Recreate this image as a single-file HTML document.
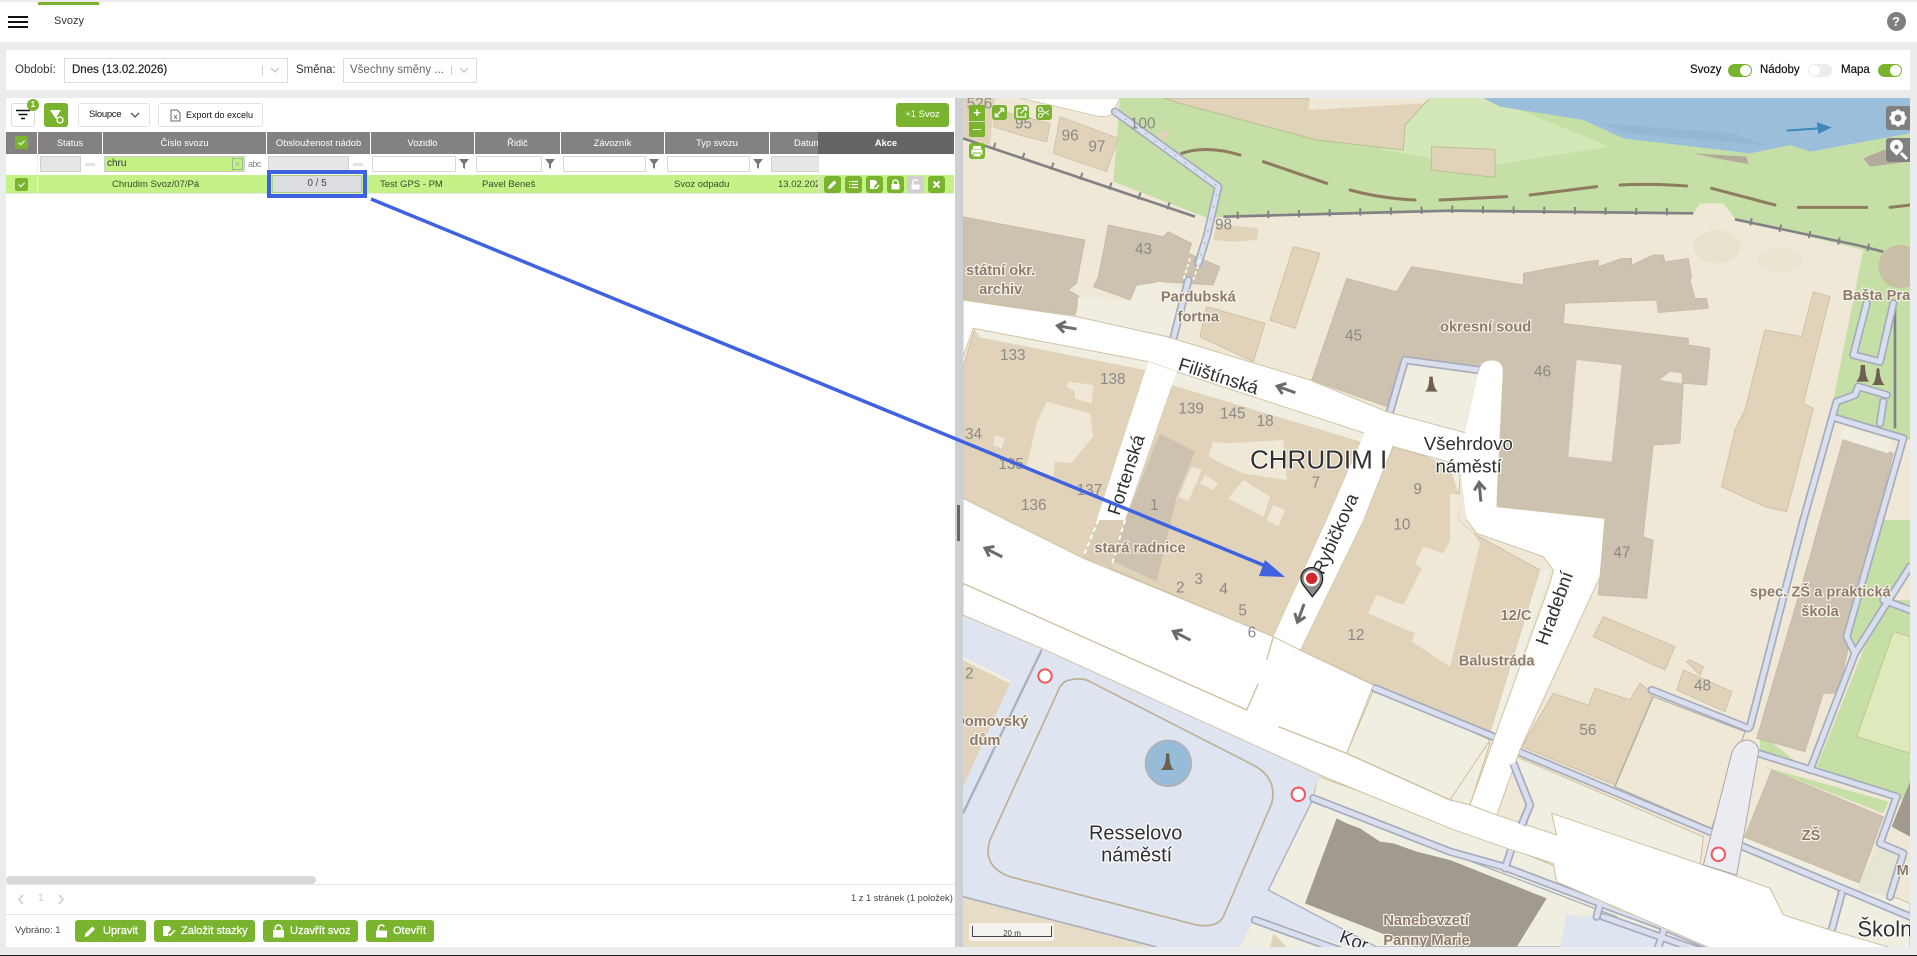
<!DOCTYPE html>
<html lang="cs"><head><meta charset="utf-8"><title>Svozy</title>
<style>
html,body{margin:0;padding:0}
body{width:1917px;height:956px;position:relative;overflow:hidden;background:#ebecee;font-family:"Liberation Sans",sans-serif;color:#333}
.a{position:absolute}
.l{position:absolute;white-space:nowrap;line-height:14px}
.box{position:absolute;box-sizing:border-box}
.th{position:absolute;top:132px;height:22px;background:#848280;color:#fff;font-size:9.3px;line-height:22px;text-align:center;white-space:nowrap;overflow:hidden}
.inp{position:absolute;top:156px;height:16px;box-sizing:border-box;border:1px solid #d9d9d9;background:#fff}
.g{background:#e6e6e6;border-color:#d0d0d0}
.dash{position:absolute;top:163px;width:10px;height:3px;background:#e2e2e2}
.tx{position:absolute;top:178px;font-size:9.5px;line-height:13px;color:#3c4a2c;white-space:nowrap}
.gb{position:absolute;background:#7ab32e;border-radius:3px;color:#fff;box-sizing:border-box}
.act{top:176px;width:17px;height:17px}
.btm{top:920px;height:22px;font-size:11px;line-height:22px;white-space:nowrap;-webkit-text-stroke:.25px #fff}
.btm svg{position:absolute;top:4px}
.btm span{position:absolute;top:0}
.cb{position:absolute;left:15px;width:13px;height:13px;background:#7ab32e;border-radius:2px}
.tg{position:absolute;top:64px;width:24px;height:13px;border-radius:7px;background:#7ab32e}
.tg i{position:absolute;top:1px;right:1px;width:11px;height:11px;border-radius:50%;background:#fff}
.sel{position:absolute;top:58px;height:25px;box-sizing:border-box;border:1px solid #ddd;background:#fff}
svg{display:block}
#map text{font-family:"Liberation Sans",sans-serif}
.n{fill:#8a8a88;font-size:46px}
.b{fill:#8f7b6c;font-size:44px;font-weight:bold;stroke:#f6f3ea;stroke-width:7px;paint-order:stroke}
.s{fill:#303030;font-size:56px;stroke:#fff;stroke-width:7px;paint-order:stroke}
.c{text-anchor:middle}
.ar{fill:none;stroke:#6b6b6b;stroke-width:9}
</style></head><body>

<!-- top bar -->
<div class="box" style="left:0;top:1px;width:1917px;height:41px;background:#fff;border-top:1px solid #f1e6f0"></div>
<div class="box" style="left:38px;top:2px;width:61px;height:3px;background:#7ab32e"></div>
<div class="box" style="left:8px;top:16px;width:20px;height:2px;background:#111"></div>
<div class="box" style="left:8px;top:21px;width:20px;height:2px;background:#111"></div>
<div class="box" style="left:8px;top:26px;width:20px;height:2px;background:#111"></div>
<div class="l" style="left:54px;top:14px;font-size:11px;color:#333">Svozy</div>
<div class="box" style="left:1886.5px;top:12px;width:19px;height:19px;border-radius:50%;background:#7f7f7f;color:#fff;font-size:13px;font-weight:bold;text-align:center;line-height:19px">?</div>

<!-- filter bar -->
<div class="box" style="left:6px;top:50px;width:1904px;height:40px;background:#fff"></div>
<div class="l" style="left:15px;top:63px;font-size:11.5px;color:#333">Období:</div>
<div class="sel" style="left:64px;width:224px"></div>
<div class="l" style="left:72px;top:63px;font-size:11.5px;color:#222;-webkit-text-stroke:.2px #222">Dnes (13.02.2026)</div>
<div class="box" style="left:262px;top:66px;width:1px;height:9px;background:#ccc"></div>
<svg class="a" style="left:270px;top:67px" width="10" height="7"><path d="M1 1l4 4 4-4" fill="none" stroke="#ccc" stroke-width="1.5"/></svg>
<div class="l" style="left:296px;top:63px;font-size:11.5px;color:#333">Směna:</div>
<div class="sel" style="left:343px;width:134px"></div>
<div class="l" style="left:350px;top:63px;font-size:11.5px;color:#666">Všechny směny ...</div>
<div class="box" style="left:451px;top:66px;width:1px;height:9px;background:#ccc"></div>
<svg class="a" style="left:459px;top:67px" width="10" height="7"><path d="M1 1l4 4 4-4" fill="none" stroke="#ccc" stroke-width="1.5"/></svg>
<div class="l" style="left:1690px;top:63px;font-size:11.5px;color:#111;-webkit-text-stroke:.2px #111">Svozy</div>
<div class="tg" style="left:1728px"><i></i></div>
<div class="l" style="left:1760px;top:63px;font-size:11.5px;color:#111;-webkit-text-stroke:.2px #111">Nádoby</div>
<div class="tg" style="left:1808px;background:#ebecee"><i style="right:auto;left:1px"></i></div>
<div class="l" style="left:1841px;top:63px;font-size:11.5px;color:#111;-webkit-text-stroke:.2px #111">Mapa</div>
<div class="tg" style="left:1878px"><i></i></div>

<!-- left panel -->
<div class="box" style="left:6px;top:98px;width:949px;height:849px;background:#fff"></div>
<div class="box" style="left:11px;top:103px;width:24px;height:24px;background:#fff;border:1px solid #ddd;border-radius:3px"></div>
<svg class="a" style="left:15px;top:108px" width="16" height="14"><path d="M1 2.500h14M3.500 6.500h9M6 10.500h4" stroke="#111" stroke-width="1.6"/></svg>
<div class="box" style="left:27px;top:99px;width:12px;height:12px;border-radius:50%;background:#7ab32e;color:#fff;font-size:8px;line-height:12px;text-align:center;font-weight:bold">1</div>
<div class="gb" style="left:44px;top:103px;width:24px;height:24px"><svg width="24" height="24"><path d="M6 7h11l-4 6v3l-3-2v-1z" fill="#fff"/><circle cx="16" cy="17" r="3" fill="#7ab32e" stroke="#fff" stroke-width="1.3"/></svg></div>
<div class="box" style="left:78px;top:103px;width:72px;height:24px;background:#fff;border:1px solid #e2e2e2;border-radius:3px"></div>
<div class="l" style="left:89px;top:108px;font-size:9.500px;letter-spacing:-.3px;color:#111">Sloupce</div>
<svg class="a" style="left:130px;top:112px" width="10" height="7"><path d="M1 1l4 4 4-4" fill="none" stroke="#555" stroke-width="1.3"/></svg>
<div class="box" style="left:158px;top:103px;width:105px;height:24px;background:#fff;border:1px solid #e2e2e2;border-radius:3px"></div>
<svg class="a" style="left:170px;top:109px" width="11" height="13"><path d="M1 1h6l3 3v8H1z" fill="#fff" stroke="#666"/><path d="M4 6l3 4M7 6l-3 4" stroke="#666" stroke-width=".8"/></svg>
<div class="l" style="left:186px;top:108px;font-size:9px;color:#111">Export do excelu</div>
<div class="gb" style="left:896px;top:103px;width:53px;height:24px;font-size:9.500px;line-height:24px;text-align:center">+1 Svoz</div>

<!-- table header -->
<div class="th" style="left:6px;width:31px"></div>
<div class="th" style="left:38px;width:64px">Status</div>
<div class="th" style="left:103px;width:163px">Číslo svozu</div>
<div class="th" style="left:267px;width:103px">Obslouženost nádob</div>
<div class="th" style="left:371px;width:103px">Vozidlo</div>
<div class="th" style="left:475px;width:85px">Řidič</div>
<div class="th" style="left:561px;width:103px">Závozník</div>
<div class="th" style="left:665px;width:104px">Typ svozu</div>
<div class="th" style="left:770px;width:48px;text-align:left;padding-left:24px;box-sizing:border-box">Datum</div>
<div class="th" style="left:818px;width:136px;background:#656565;font-weight:bold">Akce</div>
<div class="cb" style="top:136px"><svg width="13" height="13"><path d="M3.500 6.500l2.200 2.200 4-4" fill="none" stroke="#dfe" stroke-width="1.2"/></svg></div>

<!-- filter row -->
<div class="box" style="left:37px;top:154px;width:1px;height:40px;background:#eee"></div>
<div class="inp g" style="left:40px;width:41px"></div><div class="dash" style="left:85px"></div>
<div class="inp" style="left:104px;width:141px;background:#c3f283;border-color:#ccc"></div>
<div class="l" style="left:107px;top:157px;font-size:10px;color:#333">chru</div>
<div class="box" style="left:232px;top:158px;width:11px;height:12px;border:1px solid #9aba8a;color:#9aa;font-size:9px;line-height:10px;text-align:center">×</div>
<div class="l" style="left:248px;top:157px;font-size:9px;color:#888;letter-spacing:-.6px">abc</div>
<div class="inp g" style="left:268px;width:81px"></div><div class="dash" style="left:353px"></div>
<div class="inp" style="left:372px;width:84px"></div>
<div class="inp" style="left:476px;width:66px"></div>
<div class="inp" style="left:563px;width:83px"></div>
<div class="inp" style="left:667px;width:83px"></div>
<div class="inp g" style="left:771px;width:47px;border-right:0"></div>
<svg class="a" style="left:459px;top:159px" width="10" height="10"><path d="M0 0h10L6 5v5L4 8.500V5z" fill="#777"/></svg>
<svg class="a" style="left:545px;top:159px" width="10" height="10"><path d="M0 0h10L6 5v5L4 8.500V5z" fill="#777"/></svg>
<svg class="a" style="left:649px;top:159px" width="10" height="10"><path d="M0 0h10L6 5v5L4 8.500V5z" fill="#777"/></svg>
<svg class="a" style="left:753px;top:159px" width="10" height="10"><path d="M0 0h10L6 5v5L4 8.500V5z" fill="#777"/></svg>

<!-- data row -->
<div class="box" style="left:6px;top:175px;width:948px;height:19px;background:#c4f286;border-bottom:1px solid #e6e6e6"></div>
<div class="box" style="left:37px;top:175px;width:1px;height:19px;background:#e8f8d0"></div>
<div class="box" style="left:818px;top:154px;width:1px;height:40px;background:#e2e8d8"></div>
<div class="cb" style="top:178px"><svg width="13" height="13"><path d="M3.500 6.500l2.200 2.200 4-4" fill="none" stroke="#dfe" stroke-width="1.2"/></svg></div>
<div class="tx" style="left:112px">Chrudim Svoz/07/Pá</div>
<div class="box" style="left:272px;top:175px;width:90px;height:18px;background:#dcdde0;border:1px solid #a9d46c;font-size:9.800px;line-height:16px;text-align:center;color:#444">0 / 5</div>
<div class="tx" style="left:380px">Test GPS - PM</div>
<div class="tx" style="left:482px">Pavel Beneš</div>
<div class="tx" style="left:674px">Svoz odpadu</div>
<div class="tx" style="left:778px;width:40px;overflow:hidden">13.02.2026</div>

<div class="gb act" style="left:824px"><svg width="17" height="17"><path d="M4 13l.7-3 5.500-5.500 2.300 2.300L7 12.300z" fill="#fff"/></svg></div>
<div class="gb act" style="left:845px"><svg width="17" height="17"><path d="M6.500 5.500h6.500M6.500 8.500h6.500M6.500 11.500h6.500M4 5.500h1.300M4 8.500h1.300M4 11.500h1.300" stroke="#fff" stroke-width="1.2"/></svg></div>
<div class="gb act" style="left:866px"><svg width="17" height="17"><path d="M4 4h5l2 2v1l-3 3.500V13H4z" fill="#fff"/><path d="M8.500 11.500l1.500 1 3-3.500" fill="none" stroke="#fff" stroke-width="1.400"/></svg></div>
<div class="gb act" style="left:887px"><svg width="17" height="17"><path d="M4.500 8h8v5.500h-8z" fill="#fff"/><path d="M6 8V6.500a2.500 2.500 0 0 1 5 0V8" fill="none" stroke="#fff" stroke-width="1.400"/></svg></div>
<div class="gb act" style="left:907px;background:#cfcfcf"><svg width="17" height="17"><path d="M4.500 8.500h8v5h-8z" fill="#fff"/><path d="M6 8.500V6a2.500 2.500 0 0 1 4.800-.8" fill="none" stroke="#fff" stroke-width="1.400"/></svg></div>
<div class="gb act" style="left:928px"><svg width="17" height="17"><path d="M5.500 5.500l6 6M11.500 5.500l-6 6" stroke="#fff" stroke-width="2"/></svg></div>

<!-- bottom -->
<div class="box" style="left:6px;top:876px;width:310px;height:8px;background:#d8d8d8;border-radius:4px"></div>
<div class="box" style="left:6px;top:884px;width:949px;height:1px;background:#e4e4e4"></div>
<svg class="a" style="left:17px;top:894px" width="8" height="11"><path d="M6 1L2 5.500 6 10" fill="none" stroke="#ccc" stroke-width="1.500"/></svg>
<div class="l" style="left:38px;top:892px;font-size:10px;color:#ccc">1</div>
<svg class="a" style="left:57px;top:894px" width="8" height="11"><path d="M2 1L6 5.500 2 10" fill="none" stroke="#ccc" stroke-width="1.500"/></svg>
<div class="l" style="left:851px;top:891px;font-size:9.300px;color:#444">1 z 1 stránek (1 položek)</div>
<div class="box" style="left:6px;top:914px;width:949px;height:1px;background:#e4e4e4"></div>
<div class="l" style="left:15px;top:924px;font-size:9.500px;color:#444">Vybráno: 1</div>
<div class="gb btm" style="left:75px;width:71px"><svg style="left:8px" width="14" height="14"><path d="M1.500 13l.9-3.500 7-7 2.600 2.600-7 7z" fill="#fff"/></svg><span style="left:28px">Upravit</span></div>
<div class="gb btm" style="left:154px;width:101px"><svg style="left:8px" width="14" height="14"><path d="M1 2h6l2 2v1.500L6 9v3H1z" fill="#fff"/><path d="M6.500 10l1.700 1.300 4.800-5.300" fill="none" stroke="#fff" stroke-width="1.500"/></svg><span style="left:27px">Založit stazky</span></div>
<div class="gb btm" style="left:263px;width:95px"><svg style="left:9px" width="14" height="14"><path d="M1 6h11v7.500H1z" fill="#fff"/><path d="M3.300 6V4.300a3.200 3.200 0 0 1 6.400 0V6" fill="none" stroke="#fff" stroke-width="1.600"/></svg><span style="left:27px">Uzavřít svoz</span></div>
<div class="gb btm" style="left:366px;width:68px"><svg style="left:9px" width="14" height="14"><path d="M1 6.500h11v7H1z" fill="#fff"/><path d="M3.300 6.500V4a3.200 3.200 0 0 1 6-1.300" fill="none" stroke="#fff" stroke-width="1.600"/></svg><span style="left:27px">Otevřít</span></div>

<!-- splitter -->
<div class="box" style="left:955px;top:98px;width:8px;height:849px;background:#ccd0d3"></div>
<div class="box" style="left:957px;top:505px;width:3px;height:36px;background:#666"></div>

<!-- map -->
<svg id="map" class="a" style="left:963px;top:98px" width="947" height="849" viewBox="39 24 2841 2547">
<defs><g id="pp">
<path d="M495 65L805 290L770 440L745 520M715 570L670 745"/>
<path d="M1320 965L1365 810L1585 840"/>
<path d="M2560 1290L2660 935L2715 915L2725 890L2810 915M2660 985L2860 1045M2860 1045L2790 1290L2690 1640L2715 1690L2580 2040M2880 1430L2715 1690M2800 1530L2880 1560"/>
<path d="M2800 935L2790 1000M2750 640L2710 795L2790 815L2830 640"/>
<path d="M2560 1290L2400 1910"/>
<path d="M2425 1990L2840 2120L2790 2260L2860 2290L2820 2420"/>
<path d="M2355 2260L2880 2480M2675 2410L2645 2520"/>
<path d="M1275 1795L1630 1940L1705 1985L2280 2225M2105 1800L2395 1915"/>
<path d="M1690 2020L1740 2145L1715 2205"/>
<path d="M1090 2125L1500 2285L1660 2330L1950 2440L2140 2510L2330 2590M1685 2275L1665 2335M1955 2425L1940 2480M2150 2495L2125 2571M1960 2480L2300 2600"/>
<path d="M915 2490L1180 2585"/>
</g></defs>
<g style="filter:blur(.6px)">
<rect x="39" y="24" width="2841" height="2547" fill="#efe8d6"/>
<!-- greens -->
<path d="M510 24L490 275L775 385L820 380L1500 360L2230 370L2250 340L2320 340L2355 385L2740 480L2650 930L2640 985L2880 1050V24Z" fill="#c6dfa6"/>
<path d="M1000 24H1620L1980 170L1600 230L1300 180Z" fill="#d4e7b6"/>
<path d="M2150 24L2400 60L2800 24Z" fill="#d4e7b6"/>
<path d="M2790 1290H2880V1430L2710 1680L2680 1640Z" fill="#c6dfa6"/>
<path d="M2800 1530L2600 2030L2880 2140V1530Z" fill="#c6dfa6"/>
<path d="M2830 1625L2880 1640V1990L2720 1940Z" fill="#dfeabc" stroke="#c3c58f" stroke-width="3"/>
<path d="M2430 1930L2570 2040L2430 2000Z" fill="#c6dfa6"/>
<path d="M2440 2030L2815 2135L2800 2170Z" fill="#c6dfa6"/>
<path d="M2700 1290L2790 1290L2680 1650L2665 1700L2620 1800Z" fill="#c6dfa6"/>
<!-- river -->
<path d="M1600 24L1650 50L1900 90L2020 145L2400 190L2520 165L2580 185L2880 130V24Z" fill="#9bbfdb"/>
<path d="M1950 100L2350 130L2440 165L2040 130Z" fill="#8fb3cf" opacity=".6"/>
<path d="M2230 190L2390 200L2395 222L2300 205Z" fill="#b3ab9a"/>
<path d="M2740 205L2800 180L2880 175V215L2760 230Z" fill="#b3ab9a"/>
<path d="M2510 122L2605 115" stroke="#3e87bd" stroke-width="6" fill="none"/><path d="M2600 96L2645 112L2605 132Z" fill="#3e87bd"/>
<!-- top buildings -->
<path d="M640 24L1440 24L1365 105L1360 180L1100 150L690 40Z" fill="#e0d3b9" stroke="#b9c08f" stroke-width="3"/>
<path d="M1080 24H1440L1420 40L1075 60Z" fill="#efe8d6"/>
<path d="M1445 170L1635 178L1635 262L1445 240Z" fill="#e0d3b9" stroke="#b9c08f" stroke-width="3"/>
<path d="M39 24H135L120 165L39 140Z" fill="#e0d3b9"/>
<path d="M140 60L300 100L290 155L225 140L130 110Z" fill="#e0d3b9" stroke="#d1c4a8" stroke-width="3"/>
<path d="M330 80L505 145L470 245L310 190Z" fill="#e0d3b9" stroke="#d1c4a8" stroke-width="3"/>
<path d="M210 24H510L490 65Q480 85 440 78Z" fill="#fff" stroke="#d8ccb2" stroke-width="3"/>
<path d="M620 130L660 120L640 160Z" fill="#e0d3b9"/>
<path d="M800 400L925 415L920 450L850 455L790 450Z" fill="#e0d3b9"/>
<!-- walls / brown -->
<g fill="none" stroke="#8d7c60" stroke-width="9" stroke-linecap="round">
<path d="M695 190Q770 165 870 195M940 215L1130 280M1200 300Q1290 325 1395 330M1470 330L1670 320M1740 315L1940 290M2010 285Q2100 280 2210 288M2285 295L2475 345M2545 352H2750M2820 352L2880 345"/></g>
<g fill="none" stroke="#828285">
<path d="M39 145L735 380" stroke-width="8"/><path d="M130 168L735 375" stroke-width="22" stroke-dasharray="6 86"/>
<path d="M820 380L1500 362L2230 370" stroke-width="8"/><path d="M860 376L1500 358L2230 366" stroke-width="22" stroke-dasharray="6 86"/>
<path d="M2355 388L2720 465L2800 485" stroke-width="8"/><path d="M2400 395L2800 482" stroke-width="22" stroke-dasharray="6 84"/>
<path d="M2835 640V1015" stroke-width="8"/></g>
<circle cx="2850" cy="530" r="65" fill="#c9bea6"/>
<ellipse cx="2300" cy="470" rx="70" ry="50" fill="#d9d6bb" opacity=".35"/>
<ellipse cx="2490" cy="510" rx="70" ry="40" fill="#e4dec7" opacity=".35"/>
<!-- dark tan buildings -->
<g fill="#cdc2af" stroke="#c2b69f" stroke-width="2">
<path d="M39 380L405 450L380 580L355 600L390 620L375 675L39 630Z"/>
<path d="M475 405L640 440L655 425L725 460L715 490L810 530L790 585L630 575L560 585L540 630L430 590L445 560Z"/>
<path d="M1190 565L1340 605L1385 530L1720 585L1720 550L1800 535L1910 515L1945 510L1945 530L2015 505L2045 505L2045 525L2110 495L2140 495L2145 515L2215 505L2225 560L2220 570L2235 625L2270 625L2275 655L2125 668L2120 630L1845 640L1840 700L2215 745L2215 765L2280 775L2270 885L2200 880L2190 1060L2110 1065L2085 1290L2080 1340L2110 1350L2090 1525L1945 1515L1950 1460L1965 1290L1640 1250L1660 845L1360 800L1310 950L1085 870Z"/>
<path d="M2680 1045L2830 1090L2780 1290L2665 1810L2620 1810L2565 1985L2420 1945L2580 1400L2610 1290Z"/>
<path d="M2465 2040L2800 2180L2720 2400L2380 2250Z"/>
</g>
<path d="M1880 810L2015 825L1985 1115L1855 1100Z" fill="#efe8d6"/>
<path d="M2130 870L2160 845L2195 850L2195 880Z" fill="#efe8d6"/>
<!-- light buildings -->
<g fill="#e0d3b9" stroke="#cfc2a6" stroke-width="3">
<path d="M2590 605L2640 620L2560 940L2590 955L2510 1265L2445 1250L2315 1190L2355 1020L2385 960L2445 720L2555 740Z"/>
<path d="M1030 470L1110 490L1035 715L960 690Z"/>
<path d="M750 740L770 650L945 700L910 815Z"/>
<path d="M1930 1640L1960 1580L2175 1670L2145 1740Z"/>
<path d="M2210 1715L2220 1710L2260 1730L2250 1755Z"/>
<path d="M2180 1800L2200 1740L2345 1805L2325 1865Z"/>
<path d="M1715 1970L1810 1810L1915 1845L1935 1795L2040 1830L2070 1780L2110 1810L1995 2085Z"/>
</g>
<path d="M385 620L545 635L560 590L630 575L700 600L660 740L380 680Z" fill="#efeee0"/>
<path d="M2680 1010L2825 1050L2815 1090L2670 1045Z" fill="#efeee0"/>
<!-- paths -->
<path d="M2110 1820L2385 1925L2285 2215L1995 2090Z" fill="#efe8d6" stroke="#a9a9a9" stroke-width="3"/>
<!-- pale strips -->
<path d="M1700 2000L2260 2240L2250 2325L1805 2170L1820 2235L1730 2205L1745 2145L1690 2020Z" fill="#efeee0" stroke="#cdbf9f" stroke-width="3"/>
<path d="M1500 1930L1620 1960L1560 2145L1500 2130Z" fill="#efeee0" stroke="#cdbf9f" stroke-width="3"/>
<path d="M1275 1790L1190 1990L1500 2130L1620 1950Z" fill="#efeee0" stroke="#cdbf9f" stroke-width="3"/>
<path d="M2335 2350L2380 2240L2880 2440V2600L2640 2520L2500 2475L2460 2395Z" fill="#efeee0" stroke="#cdbf9f" stroke-width="3"/>
<path d="M2790 2260L2860 2290L2820 2420L2720 2400Z" fill="#e6e4d2"/>
<path d="M1105 2060L1500 2200L2335 2540V2571H1640L1090 2120Z" fill="#efeee0" stroke="#cdbf9f" stroke-width="3"/>
<!-- tan blocks -->
<g fill="#e0d3b9" stroke="#cfc2a6" stroke-width="3">
<path d="M39 830L75 715L600 815L445 1290L400 1405L39 1225Z"/>
<path d="M680 845L1245 1025L1130 1290L970 1640L480 1435L525 1290Z"/>
<path d="M1330 1070L1530 1130L1525 1290L1570 1330L1770 1440L1620 1930L1275 1785L1050 1680L1240 1290Z"/>
</g>
<!-- plaza -->
<path d="M39 1575L275 1675L1110 2055L1085 2120L1500 2290L2300 2600L915 2571L1100 2571L1170 2571L915 2480L870 2571H620L39 2420Z" fill="#dfe4f1"/>
<path d="M955 2400L1085 2135L1500 2290L2000 2480L1950 2571H1280Z" fill="#efeee0" stroke="#a9afbd" stroke-width="4"/>
<path d="M1160 2185L1190 2200L1230 2215L1290 2255L1330 2260L1400 2285L1500 2310L1790 2425L1700 2571H1400L1065 2440Z" fill="#a09a8f"/>
<path d="M2880 2075L2825 2210L2880 2240Z" fill="#a09a8f"/>
<path d="M915 2480L1200 2571H870Z" fill="#efeee0"/>
<path d="M970 2530L1010 2571H960Z" fill="#e0d3b9"/>
<path d="M39 2420L620 2571H39Z" fill="#e7ddc6"/>
<path d="M39 2420L620 2571" fill="none" stroke="#a9afbd" stroke-width="5"/>
<path d="M39 1710L180 1780L39 2090Z" fill="#e0d3b9"/>
<path d="M39 1705L180 1775" fill="none" stroke="#efeee0" stroke-width="10"/>
<path d="M275 1680L39 2170" fill="none" stroke="#a9afbd" stroke-width="7"/>
<path d="M360 1770Q400 1760 430 1780L900 2020Q985 2060 965 2140L820 2480Q800 2515 740 2505L180 2360Q95 2330 120 2250L330 1790Q345 1770 360 1770Z" fill="none" stroke="#bdb096" stroke-width="5"/>
<path d="M1850 2470L1885 2480L1940 2480L2040 2520L2030 2571H1830Z" fill="#dfe4f1"/>
<!-- courtyards -->
<g fill="#efe8d6">
<path d="M70 715L600 815L585 840L90 742Z" fill="#efeee0"/>
<path d="M290 935L420 970L430 1040L380 1100L365 1120L315 1115L310 1160L230 1130L260 1000Z"/>
<path d="M355 875L430 885L425 940L375 925L375 905L350 890Z"/>
<path d="M135 1035L165 1045L155 1075L130 1065Z"/>
<path d="M680 845L1245 1025L1232 1055L665 885Z" fill="#efeee0"/>
<path d="M790 1055L835 1060L1000 1050L1010 1170L940 1160L880 1150L835 1130L775 1100Z"/>
<path d="M725 1130L755 1140L715 1235L685 1220Z"/>
<path d="M765 1155L805 1180L790 1200L750 1180Z"/>
<path d="M880 1170L960 1220L940 1280L835 1225Z"/>
<path d="M970 1245L1005 1260L985 1310L950 1290Z"/>
<path d="M1500 1210L1530 1215L1525 1290L1570 1330L1590 1360L1500 1730L1385 1655L1395 1630L1255 1570L1280 1515L1360 1545L1415 1435L1395 1420L1420 1370L1480 1390L1500 1350Z"/>
<path d="M1335 1060L1530 1125L1525 1210L1500 1130Z" fill="#efeee0"/>
<path d="M1770 1440L1800 1440L1640 1930L1620 1930Z" fill="#efeee0"/>
</g>
<path d="M630 1030L735 1085L680 1220L620 1475L480 1410L525 1290Z" fill="#cdc2af"/>
<path d="M440 1290H525L480 1435L400 1405Z" fill="#d9cdb5"/>
<path d="M445 1290L400 1400M525 1290L485 1425" stroke="#fff" stroke-width="6" stroke-dasharray="14 10" fill="none"/>
<path d="M1325 965L1380 825L1580 852L1545 1035Z" fill="#efeee0"/>
<use href="#pp" fill="none" stroke="#a6acbb" stroke-width="25" stroke-linejoin="round" stroke-linecap="round"/>
<use href="#pp" fill="none" stroke="#d9dfee" stroke-width="15" stroke-linejoin="round" stroke-linecap="round"/>
<path d="M495 65L805 290L770 440L745 520" fill="none" stroke="#9aa0af" stroke-width="3" stroke-dasharray="5 32"/>
<path d="M720 505L700 570M750 510L730 570" stroke="#fff" stroke-width="5" stroke-dasharray="10 8" fill="none"/>
<path d="M1970 2440L2340 2575L2300 2571L1985 2452Z" fill="#c6dfa6"/>
<!-- white roads -->
<g fill="#fff" stroke="#d0c3a6" stroke-width="3">
<path d="M39 630L380 680L650 740L1080 870L1310 965L1590 1040L1620 1150L1330 1070L1245 1030L680 845L595 815L70 715L39 800Z" />
<path d="M595 815L680 845L525 1290H440Z" stroke="none"/>
<path d="M1245 1025L1330 1060L1240 1290L1050 1680L950 1710L970 1640L1130 1290Z" stroke="none"/>
<path d="M1585 845Q1590 810 1625 810Q1660 810 1660 845L1640 1250L1965 1285L1950 1460L1710 1980L1640 2175L1560 2145L1800 1480L1810 1440L1780 1400L1580 1330L1550 1290Z"/>
<path d="M1545 1030L1585 845L1640 860L1640 1250L1550 1290L1530 1135Z" stroke="none"/>
<path d="M39 1225L400 1405L970 1640L1050 1680L1270 1785L1190 1990L1500 2130L1560 2145L1640 2175L1820 2235L1805 2170L2260 2325L2335 2350L2460 2395L2500 2475L2640 2520L2880 2590V2600H2340L1820 2375L1810 2320L1670 2275L1500 2215L1110 2055L275 1675L39 1575Z"/>
</g>
<path d="M39 1480L890 1860L925 1780" fill="none" stroke="#cdbf9f" stroke-width="4"/>
<path d="M985 1910L1190 1990L1500 2130" fill="none" stroke="#cdbf9f" stroke-width="4"/>
<path d="M970 1640L950 1710" fill="none" stroke="#cdbf9f" stroke-width="4"/>
<path d="M1690 2020L1740 2145L1715 2205" fill="none" stroke="#a6acbb" stroke-width="25"/><path d="M1690 2020L1740 2145L1715 2205" fill="none" stroke="#d9dfee" stroke-width="15"/>
<!-- lilac road -->
<path d="M2360 2355L2260 2325L2345 1990Q2360 1950 2395 1950Q2430 1960 2425 1990Z" fill="#ecebf1" stroke="#a9a9a9" stroke-width="3"/>
<!-- fountain -->
<circle cx="655" cy="2020" r="68" fill="#97bcd9" stroke="#adb2bc" stroke-width="6"/>
<path d="M632 2040Q648 2030 648 1990H658Q658 2030 672 2040Z" fill="#6f5f50"/>
<path d="M1425 905Q1438 895 1438 860H1448Q1450 895 1464 905Z" fill="#6f5f50"/>
<path d="M2718 875Q2732 865 2732 825H2745Q2746 865 2758 875Z" fill="#6f5f50"/>
<path d="M2766 885Q2778 875 2780 835H2788Q2790 875 2804 885Z" fill="#6f5f50"/>
<!-- hydrants -->
<g fill="#fff" stroke="#f4545e" stroke-width="6"><circle cx="285" cy="1758" r="20"/><circle cx="1045" cy="2113" r="20"/><circle cx="2305" cy="2293" r="20"/></g>
<!-- arrows -->
<g class="ar"><path transform="translate(350 712) rotate(10)" d="M30 0H-25M-5-17L-28 0L-5 17"/><path transform="translate(1008 898) rotate(20)" d="M30 0H-25M-5-17L-28 0L-5 17"/><path transform="translate(130 1387) rotate(27)" d="M30 0H-25M-5-17L-28 0L-5 17"/><path transform="translate(695 1637) rotate(27)" d="M30 0H-25M-5-17L-28 0L-5 17"/><path transform="translate(1052 1570) rotate(-70)" d="M30 0H-25M-5-17L-28 0L-5 17"/><path transform="translate(1590 1205) rotate(85)" d="M30 0H-25M-5-17L-28 0L-5 17"/></g>
<!-- labels -->
<text class="n" x="50" y="55">526</text><text class="n" x="195" y="115">95</text><text class="n" x="335" y="152">96</text><text class="n" x="415" y="185">97</text><text class="n" x="540" y="115">100</text><text class="n" x="795" y="418">98</text><text class="n" x="555" y="492">43</text><text class="n" x="1185" y="752">45</text><text class="n" x="150" y="810">133</text><text class="n" x="450" y="882">138</text><text class="n" x="45" y="1047">34</text><text class="n" x="145" y="1137">135</text><text class="n" x="213" y="1260">136</text><text class="n" x="380" y="1215">137</text><text class="n" x="685" y="970">139</text><text class="n" x="810" y="985">145</text><text class="n" x="920" y="1008">18</text><text class="n" x="1085" y="1192">7</text><text class="n" x="600" y="1260">1</text><text class="n" x="1390" y="1212">9</text><text class="n" x="1330" y="1318">10</text><text class="n" x="1752" y="860">46</text><text class="n" x="1990" y="1402">47</text><text class="n" x="2232" y="1802">48</text><text class="n" x="1888" y="1935">56</text><text class="n" x="1192" y="1650">12</text><text class="n" x="678" y="1508">2</text><text class="n" x="733" y="1482">3</text><text class="n" x="808" y="1512">4</text><text class="n" x="865" y="1577">5</text><text class="n" x="893" y="1642">6</text><text class="n" x="45" y="1765">2</text>
<text class="b c" x="152" y="555">státní okr.</text><text class="b c" x="152" y="612">archiv</text><text class="b c" x="745" y="635">Pardubská</text><text class="b c" x="745" y="695">fortna</text><text class="b c" x="1607" y="725">okresní soud</text><text class="b" x="2678" y="630">Bašta Prachárna</text><text class="b c" x="570" y="1388">stará radnice</text><text class="b c" x="1698" y="1590">12/C</text><text class="b c" x="1640" y="1727">Balustráda</text><text class="b c" x="2611" y="1520">spec. ZŠ a praktická</text><text class="b c" x="2610" y="1578">škola</text><text class="b c" x="2583" y="2250">ZŠ</text><text class="b" x="235" y="1908" text-anchor="end">Domovský</text><text class="b c" x="105" y="1965">dům</text><text class="b" x="1300" y="2505">Nanebevzetí</text><text class="b" x="1300" y="2565">Panny Marie</text><text class="b" x="2840" y="2355">Muzeum</text>
<text class="s c" transform="translate(805 860) rotate(17.500)" y="17">Filištínská</text>
<text class="s c" transform="translate(530 1155) rotate(-72)" y="17">Fortenská</text>
<text class="s c" transform="translate(1158 1332) rotate(-66)" y="17">Rybičkova</text>
<text class="s c" transform="translate(1815 1555) rotate(-70)" y="17">Hradební</text>
<text class="s c" x="1555" y="1080">Všehrdovo</text><text class="s c" x="1556" y="1147">náměstí</text>
<text class="s c" x="557" y="2248" style="font-size:60px">Resselovo</text><text class="s c" x="560" y="2315" style="font-size:60px">náměstí</text>
<text class="s" x="2722" y="2540" style="font-size:66px">Školní</text>
<text class="s" transform="translate(1165 2555) rotate(20)">Kor</text>
<text class="s" x="900" y="1135" style="font-size:78px;stroke-width:6px">CHRUDIM I</text>
<!-- marker -->
<path d="M1087 1520C1060 1485 1053 1480 1053 1465A32 32 0 1 1 1118 1465C1118 1480 1112 1490 1087 1520Z" fill="#8a8a8a" stroke="#222" stroke-width="4"/>
<circle cx="1085" cy="1465" r="24" fill="#fff"/><circle cx="1085" cy="1465" r="17" fill="#d2282c"/>
</g>
</svg>

<!-- map controls -->
<div class="gb" style="left:969px;top:105px;width:16px;height:16px;border-radius:2px 2px 0 0;text-align:center;font-size:13px;font-weight:bold;line-height:15px">+</div>
<div class="gb" style="left:969px;top:121.500px;width:16px;height:15px;border-radius:0 0 2px 2px;text-align:center"><div class="a" style="left:4px;top:7px;width:8px;height:1.500px;background:#fff"></div></div>
<div class="gb" style="left:969px;top:143px;width:16px;height:16px"><svg width="16" height="16"><path d="M4 3h8v3H4zM2.500 6.500h11v5H12v-2H4v2H2.500z" fill="#fff"/><path d="M4.500 10.500h7v3h-7z" fill="#fff"/></svg></div>
<div class="gb" style="left:992px;top:105px;width:15px;height:15px"><svg width="15" height="15"><path d="M4 11l7-7M8 3.500h3.500V7M3.500 8v3.500H7" fill="none" stroke="#fff" stroke-width="1.500"/></svg></div>
<div class="gb" style="left:1014px;top:105px;width:15px;height:15px"><svg width="15" height="15"><path d="M7 3.500H3v8.500h8.500V8M6.500 8.500L12.500 2.500M9 2.500h3.500V6" fill="none" stroke="#fff" stroke-width="1.300"/></svg></div>
<div class="gb" style="left:1036px;top:105px;width:16px;height:15px"><svg width="16" height="15"><circle cx="4.500" cy="4.500" r="2" fill="none" stroke="#fff"/><circle cx="4.500" cy="10.500" r="2" fill="none" stroke="#fff"/><path d="M6 5.500l7 4M6 9.500l7-4" stroke="#fff"/></svg></div>
<div class="box" style="left:1886px;top:106px;width:24px;height:24px;background:#808080;border-radius:3px 0 0 3px"><svg width="24" height="24"><circle cx="12" cy="12" r="5.500" fill="none" stroke="#fff" stroke-width="4"/><path d="M12 3.500v3.500M12 17v3.500M3.500 12H7M17 12h3.500M6 6l2.500 2.500M15.500 15.500L18 18M18 6l-2.500 2.500M8.500 15.500L6 18" stroke="#fff" stroke-width="3"/></svg></div>
<div class="box" style="left:1886px;top:138px;width:24px;height:24px;background:#808080;border-radius:3px 0 0 3px"><svg width="24" height="24"><path d="M10.500 17.500L6 13a6.500 6.500 0 1 1 9 0z" fill="#fff"/><circle cx="10.500" cy="9" r="2.200" fill="#808080"/><path d="M15 15l6 6" stroke="#fff" stroke-width="3"/></svg></div>
<div class="box" style="left:969px;top:923px;width:85px;height:18px;background:#f5f3ee;border-radius:2px"></div>
<div class="box" style="left:972px;top:926px;width:80px;height:11px;border:1px solid #444;border-top:0;text-align:center;font-size:8px;line-height:15px;color:#444">20 m</div>

<!-- dark line at bottom -->
<div class="box" style="left:0;top:955px;width:1917px;height:1px;background:#222"></div>

<!-- overlay -->
<div class="box" style="left:267px;top:170px;width:100px;height:28px;border:4px solid #3f62e0"></div>
<svg class="a" style="left:0;top:0" width="1917" height="956"><path d="M371 199L1268 567" stroke="#3f62e0" stroke-width="3.500"/><path d="M1285 577L1265 560L1259 576Z" fill="#3f62e0"/></svg>
</body></html>
